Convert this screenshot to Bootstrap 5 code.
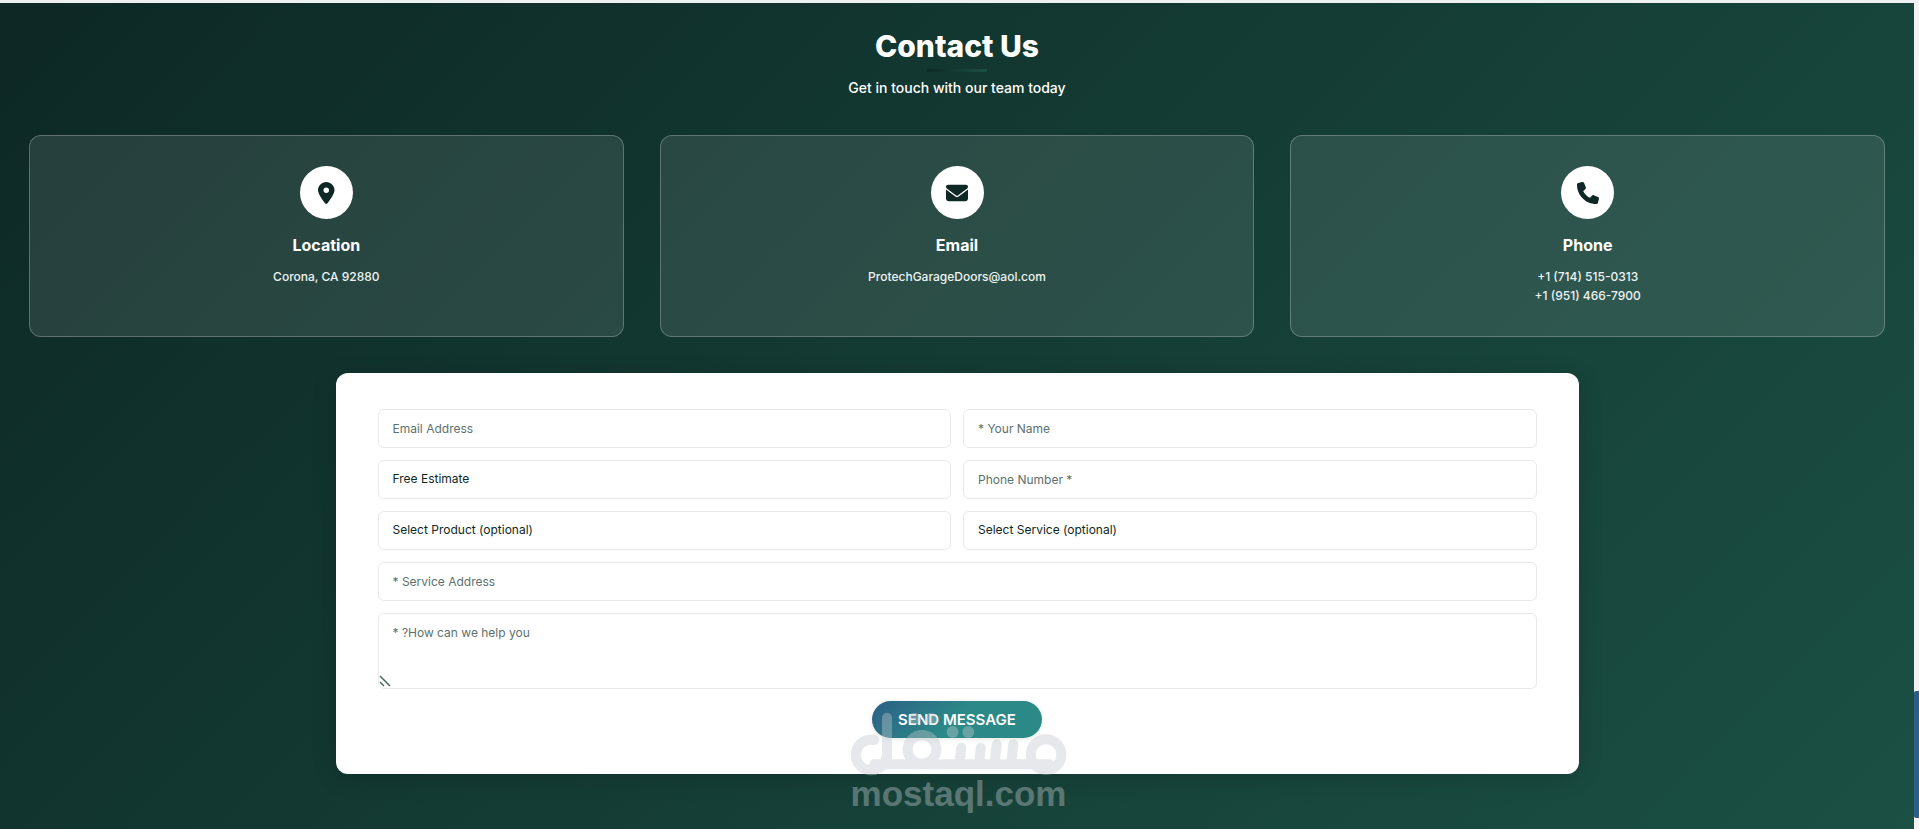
<!DOCTYPE html>
<html lang="en">
<head>
<meta charset="utf-8">
<meta name="viewport" content="width=device-width, initial-scale=1">
<title>Contact Us</title>
<link href="https://cdn.jsdelivr.net/npm/bootstrap@5.3.0/dist/css/bootstrap.min.css" rel="stylesheet">
<style>
  :root { --ink: #0d2825; }
  body { font-family: Inter, sans-serif; background: #f3f3f1; border-top: 3px solid #eef1f1; min-height: 100vh; }
  .contact-section { background: linear-gradient(135deg, #0d2825 0%, #1b5044 100%); padding: 24px 29px 54px; min-width: 0; }
  .section-title { font-size: 30px; line-height: 38px; font-weight: 800; }
  .title-rule { width: 60px; height: 3px; border-radius: 2px; background: linear-gradient(90deg, #0d2825, #1b5044); margin-top: 4px; }
  .section-lead { font-size: 14px; line-height: 24px; font-weight: 500; margin: 4px 0 35px; }
  .info-grid { gap: 36px; }
  .info-card { flex: 1 1 240px; background: rgba(255,255,255,.1); border: 1px solid rgba(255,255,255,.25); border-radius: 12px; padding: 30px 24px; min-height: 202px; }
  .info-icon { width: 53px; height: 53px; background: #fff; color: var(--ink); }
  .info-icon svg { height: 22px; }
  .info-card h3 { font-size: 16px; line-height: 20px; font-weight: 700; margin: 16px 0 12px; }
  .info-card p, .info-card a { font-size: 12px; line-height: 19px; font-weight: 500; color: #edf3f3; }
  .form-panel { max-width: 1243px; margin: 36px auto 0; padding: 36px 42px; border-radius: 12px; box-shadow: 0 4px 24px rgba(0,0,0,.16); }
  .form-panel .row { --bs-gutter-x: 12px; --bs-gutter-y: 12px; }
  .field { height: 39px; padding: 0 14px 1px; border: 1px solid #e7eaeb; border-radius: 6px; font-size: 12px; line-height: 18px; color: var(--ink); background: #fff; }
  select.field { appearance: none; }
  .field::placeholder { color: #5c716e; opacity: 1; }
  textarea.field { display: block; height: 76px; padding-top: 10px; resize: none; }
  .grip { position: absolute; left: 1px; bottom: 2px; width: 12px; height: 12px; }
  .send-btn { height: 37px; padding: 0 26px; border: 0; border-radius: 19px; color: #fff; font-size: 15px; line-height: 20px; font-weight: 600; background: linear-gradient(135deg, #2c5f86 0%, #2b8a88 50%); box-shadow: 0 1px 5px rgba(13,40,37,.12); }
  .watermark { position: absolute; left: 50%; bottom: 18px; width: 217px; margin-left: -107px; opacity: .4; color: #c1c8ce; pointer-events: none; text-align: center; }
  .watermark svg { display: block; width: 217px; height: 64px; }
  .watermark span { display: block; font: 700 35px/35px "Liberation Sans", sans-serif; }
  .scroll-track { width: 5px; position: relative; }
  .scroll-thumb { position: absolute; left: 0; right: 0; bottom: 11px; height: 127px; background: #2c5f86; border-radius: 2px 0 0 2px; }
</style>
</head>
<body class="d-flex">
<main class="contact-section flex-grow-1 position-relative text-white">
  <header class="d-flex flex-column align-items-center text-center">
    <h2 class="section-title mb-0">Contact Us</h2>
    <div class="title-rule"></div>
    <p class="section-lead">Get in touch with our team today</p>
  </header>

  <div class="info-grid d-flex flex-wrap">
    <article class="info-card d-flex flex-column align-items-center text-center">
      <div class="info-icon rounded-circle d-flex align-items-center justify-content-center">
        <svg viewBox="0 0 384 512" fill="currentColor" aria-hidden="true"><path d="M215.7 499.2C267 435 384 279.4 384 192C384 86 298 0 192 0S0 86 0 192c0 87.4 117 243 168.3 307.2c12.3 15.3 35.1 15.3 47.4 0zM192 128a64 64 0 1 1 0 128 64 64 0 1 1 0-128z"/></svg>
      </div>
      <h3>Location</h3>
      <p class="mb-0">Corona, CA 92880</p>
    </article>
    <article class="info-card d-flex flex-column align-items-center text-center">
      <div class="info-icon rounded-circle d-flex align-items-center justify-content-center">
        <svg viewBox="0 0 512 512" fill="currentColor" aria-hidden="true"><path d="M48 64C21.5 64 0 85.5 0 112c0 15.1 7.1 29.3 19.2 38.4L236.8 313.6c11.4 8.5 27 8.5 38.4 0L492.8 150.4c12.1-9.1 19.2-23.3 19.2-38.4c0-26.5-21.5-48-48-48H48zM0 176V384c0 35.3 28.7 64 64 64H448c35.3 0 64-28.7 64-64V176L294.4 339.2c-22.8 17.1-54 17.1-76.8 0L0 176z"/></svg>
      </div>
      <h3>Email</h3>
      <a class="text-decoration-none" href="mailto:ProtechGarageDoors@aol.com">ProtechGarageDoors@aol.com</a>
    </article>
    <article class="info-card d-flex flex-column align-items-center text-center">
      <div class="info-icon rounded-circle d-flex align-items-center justify-content-center">
        <svg viewBox="0 0 512 512" fill="currentColor" aria-hidden="true"><path d="M164.9 24.6c-7.7-18.6-28-28.5-47.4-23.2l-88 24C12.1 30.2 0 46 0 64C0 311.4 200.6 512 448 512c18 0 33.8-12.1 38.6-29.5l24-88c5.3-19.4-4.6-39.7-23.2-47.4l-96-40c-16.3-6.8-35.2-2.1-46.3 11.6L304.7 368C234.3 334.7 177.3 277.7 144 207.3L193.3 167c13.7-11.2 18.4-30 11.6-46.3l-40-96z"/></svg>
      </div>
      <h3>Phone</h3>
      <a class="text-decoration-none" href="tel:+17145150313">+1 (714) 515-0313</a>
      <a class="text-decoration-none" href="tel:+19514667900">+1 (951) 466-7900</a>
    </article>
  </div>

  <form class="form-panel bg-white">
    <div class="row">
      <div class="col-md-6"><input class="field w-100" type="email" placeholder="Email Address" aria-label="Email Address"></div>
      <div class="col-md-6"><input class="field w-100" type="text" placeholder="* Your Name" aria-label="Your Name"></div>
      <div class="col-md-6"><select class="field w-100" aria-label="Request type"><option>Free Estimate</option></select></div>
      <div class="col-md-6"><input class="field w-100" type="tel" placeholder="Phone Number *" aria-label="Phone Number"></div>
      <div class="col-md-6"><select class="field w-100" aria-label="Product"><option>Select Product (optional)</option></select></div>
      <div class="col-md-6"><select class="field w-100" aria-label="Service"><option>Select Service (optional)</option></select></div>
      <div class="col-12"><input class="field w-100" type="text" placeholder="* Service Address" aria-label="Service Address"></div>
      <div class="col-12"><div class="position-relative">
        <textarea class="field w-100" placeholder="* ?How can we help you" aria-label="How can we help you?"></textarea>
        <svg class="grip" viewBox="0 0 12 12" fill="none" stroke="#4d6663" stroke-width="1.5" aria-hidden="true"><path d="M1 1l10 10M1 7l4 4"/></svg>
      </div></div>
      <div class="col-12 d-flex justify-content-center"><button class="send-btn" type="button">SEND MESSAGE</button></div>
    </div>
  </form>

  <div class="watermark">
    <svg viewBox="92 98 651 192" fill="none" stroke="currentColor" stroke-width="30" stroke-linecap="round" aria-hidden="true">
      <path d="M165 182A46 46 0 1 0 200 238M203 115V240M165 255H690"/>
      <circle cx="308" cy="210" r="43"/><circle cx="680" cy="226" r="46"/>
      <path d="M426 205L420 250M484 205L480 250M532 195L526 250M582 195L576 250"/>
      <g fill="currentColor" stroke="none"><circle cx="400" cy="158" r="18"/><circle cx="447" cy="158" r="18"/><circle cx="285" cy="118" r="18"/><circle cx="335" cy="118" r="18"/></g>
    </svg>
    <span>mostaql.com</span>
  </div>
</main>
<div class="scroll-track flex-shrink-0" aria-hidden="true"><div class="scroll-thumb"></div></div>
<script src="https://cdn.jsdelivr.net/npm/bootstrap@5.3.0/dist/js/bootstrap.bundle.min.js"></script>
</body>
</html>
